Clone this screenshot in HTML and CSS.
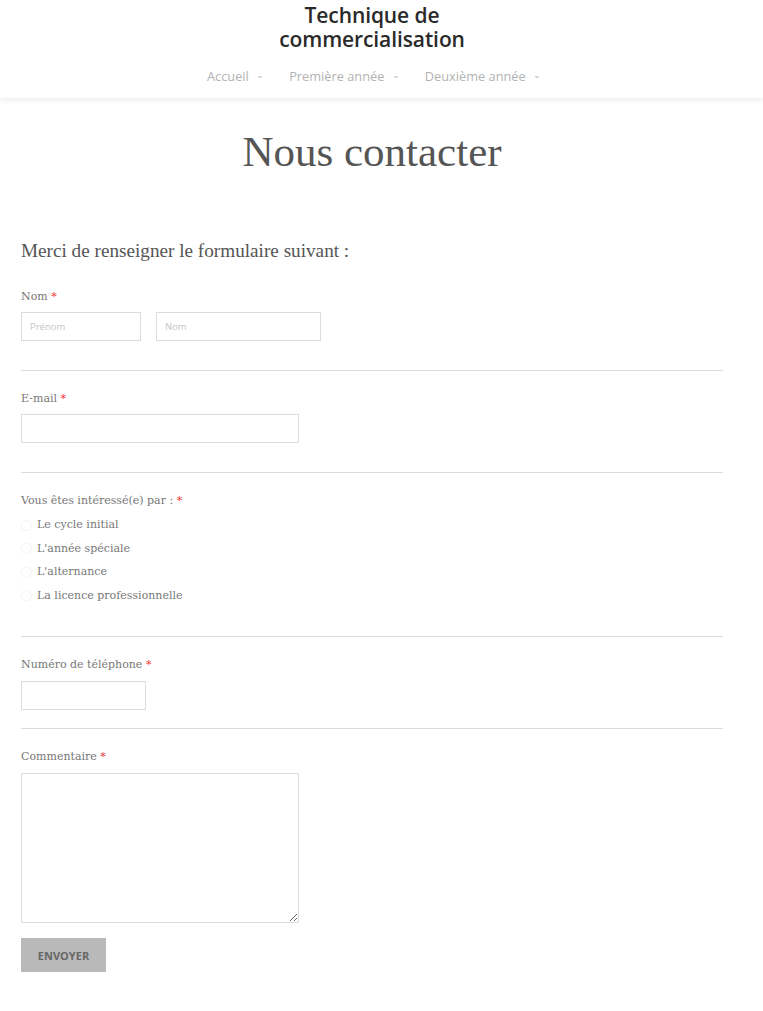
FILE: index.html
```html
<!DOCTYPE html>
<html lang="fr">
<head>
<meta charset="utf-8">
<title>Nous contacter</title>
<link rel="stylesheet" href="styles.css">
</head>
<body>
<header class="site-header">
  <div class="brand">Technique de<br>commercialisation</div>
  <nav class="nav">
    <span class="nav-item">Accueil <span class="caret">&#8964;</span></span>
    <span class="nav-item">Première année <span class="caret">&#8964;</span></span>
    <span class="nav-item">Deuxième année <span class="caret">&#8964;</span></span>
  </nav>
</header>
<main class="main">
  <h1 class="page-title">Nous contacter</h1>
  <h2 class="intro">Merci de renseigner le formulaire suivant :</h2>
  <form class="form">
    <div class="field">
      <div class="label">Nom <span class="req">*</span></div>
      <div class="name-row">
        <input class="input w-first" placeholder="Prénom">
        <input class="input w-last" placeholder="Nom">
      </div>
    </div>
    <div class="field">
      <div class="label">E-mail <span class="req">*</span></div>
      <input class="input w-wide">
    </div>
    <div class="field field-radio">
      <div class="label">Vous êtes intéressé(e) par : <span class="req">*</span></div>
      <div class="options">
        <label class="option"><span class="radio"></span>Le cycle initial</label>
        <label class="option"><span class="radio"></span>L'année spéciale</label>
        <label class="option"><span class="radio"></span>L'alternance</label>
        <label class="option"><span class="radio"></span>La licence professionnelle</label>
      </div>
    </div>
    <div class="field field-phone">
      <div class="label">Numéro de téléphone <span class="req">*</span></div>
      <input class="input w-phone">
    </div>
    <div class="field field-last">
      <div class="label">Commentaire <span class="req">*</span></div>
      <textarea class="textarea"></textarea>
      <button type="button" class="btn">ENVOYER</button>
    </div>
  </form>
</main>
</body>
</html>
```

FILE: styles.css
```css
* { box-sizing: border-box; }
body {
  margin: 0;
  background: #fff;
  font-family: "DejaVu Serif", serif;
  color: #777;
}
.site-header {
  height: 99px;
  display: flex;
  flex-direction: column;
  align-items: center;
  padding: 3px 19px 0 0;
  box-shadow: 0 2px 5px rgba(0,0,0,0.06);
  border-bottom: 1px solid #f3f3f3;
}
.brand {
  font-family: "Open Sans", sans-serif;
  font-weight: 600;
  font-size: 21px;
  line-height: 24px;
  color: #2a2a2a;
  text-align: center;
  letter-spacing: -0.1px;
}
.nav {
  display: flex;
  gap: 25px;
  margin-top: 16px;
  margin-left: 4px;
}
.nav-item {
  font-family: "Open Sans", sans-serif;
  font-size: 12.8px;
  color: #b3b3b3;
}
.caret {
  font-size: 9px;
  margin-left: 4px;
  position: relative;
  top: -3px;
}
.main {
  padding: 0 40px 0 21px;
}
.page-title {
  font-family: "Liberation Serif", serif;
  font-weight: normal;
  font-size: 43px;
  color: #555;
  text-align: center;
  margin: 26px 0 0;
  line-height: 54px;
}
.intro {
  font-family: "Liberation Serif", serif;
  font-weight: normal;
  font-size: 19.2px;
  color: #555;
  margin: 59px 0 0;
  line-height: 26px;
}
.form { margin-top: 25px; }
.field {
  border-bottom: 1px solid #dcdcdc;
  padding-bottom: 29px;
  margin-bottom: 20px;
}
.field-radio { padding-bottom: 32px; margin-bottom: 20px; }
.field-phone { padding-bottom: 18px; margin-bottom: 20px; }
.field-last { border-bottom: none; }
.label {
  font-size: 11px;
  line-height: 16px;
  color: #777;
  margin-bottom: 7px;
}
.field-radio .label,
.field-phone .label,
.field-last .label { margin-bottom: 8px; }
.req { color: #e33; }
.name-row { display: flex; gap: 15px; }
.input {
  display: block;
  height: 29px;
  border: 1px solid #dcdcdc;
  background: #fff;
  padding: 0 8px;
  font-family: "Open Sans", sans-serif;
  font-size: 9.5px;
  margin: 0;
}
.input::placeholder { color: #c5c5c5; }
.w-first { width: 120px; }
.w-last { width: 165px; }
.w-wide { width: 278px; }
.w-phone { width: 125px; }
.options { display: flex; flex-direction: column; gap: 7px; margin-top: 0; }
.option {
  display: flex;
  align-items: center;
  font-size: 11px;
  line-height: 16.5px;
  color: #777;
}
.radio {
  width: 11px;
  height: 11px;
  border: 1px solid #f3f3f3;
  border-radius: 50%;
  margin-right: 5px;
}
.textarea {
  display: block;
  width: 278px;
  height: 150px;
  border: 1px solid #dcdcdc;
  margin: 0;
  resize: both;
}
.btn {
  display: block;
  margin-top: 15px;
  width: 85px;
  height: 34px;
  border: none;
  background: #b9b9b9;
  color: #666;
  font-family: "Open Sans", sans-serif;
  font-weight: 700;
  font-size: 11px;
  padding: 0;
}
```
